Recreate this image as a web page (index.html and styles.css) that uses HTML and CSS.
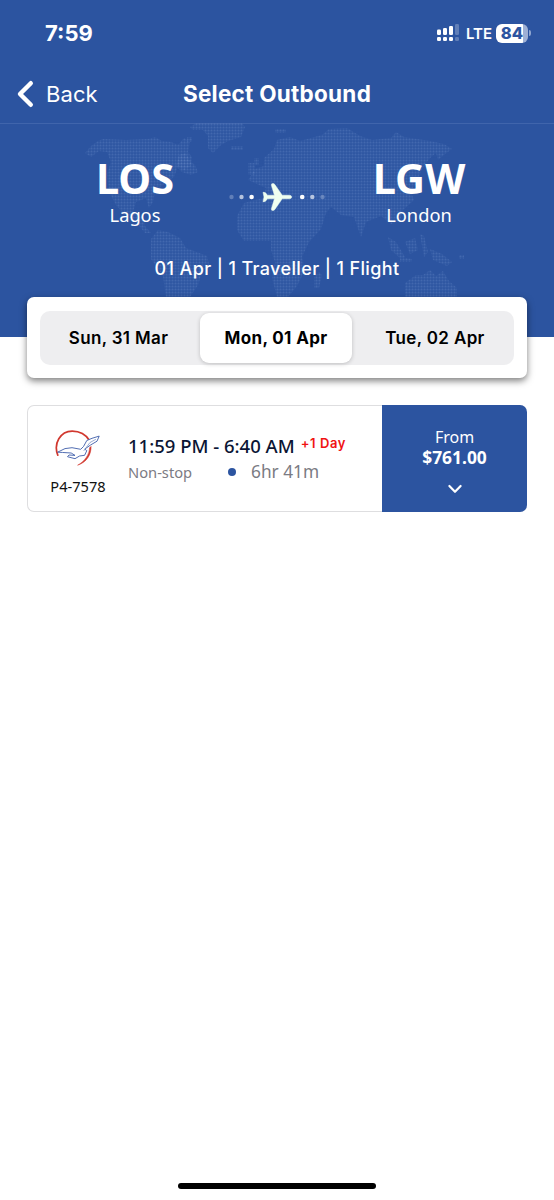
FILE: index.html
```html
<!DOCTYPE html>
<html lang="en">
<head>
<meta charset="utf-8">
<meta name="viewport" content="width=device-width, initial-scale=1">
<title>Select Outbound</title>
<link rel="stylesheet" href="styles.css">
</head>
<body>
<div class="screen">
  <header class="top">
    <div class="status">
      <span class="clock">7:59</span>
      <div class="indicators">
        <svg class="signal" width="23" height="18" viewBox="0 0 23 18" fill="#fff">
          <rect x="0" y="5.5" width="4" height="5.5" rx="1.2"/><rect x="6" y="4" width="4" height="7" rx="1.2"/><rect x="12" y="2" width="4" height="9" rx="1.2"/><rect x="18" y="0" width="4" height="11" rx="1.2" opacity=".25"/>
          <rect x="0" y="13" width="4" height="4" rx="1.2"/><rect x="6" y="13" width="4" height="4" rx="1.2"/><rect x="12" y="13" width="4" height="4" rx="1.2"/><rect x="18" y="13" width="4" height="4" rx="1.2" opacity=".25"/>
        </svg>
        <span class="network">LTE</span>
        <span class="battery"><span class="charge">84</span></span><span class="cap"></span>
      </div>
    </div>
    <nav class="nav">
      <div class="back">
        <svg width="18" height="28" viewBox="0 0 18 28" fill="none" stroke="#fff" stroke-width="4.4" stroke-linecap="round" stroke-linejoin="round"><path d="M14.8 3.2 4 14l10.8 10.8"/></svg>
        <span>Back</span>
      </div>
      <h1>Select Outbound</h1>
    </nav>
    <section class="hero">
      <svg class="map" width="554" height="174" viewBox="0 123 554 174">
        <defs><pattern id="dots" width="3" height="3" patternUnits="userSpaceOnUse"><rect x=".5" y=".5" width="2" height="2" rx=".6" fill="#8da9e0" fill-opacity=".23"/></pattern></defs>
        <g fill="url(#dots)">
          <path d="M85 153 91 146 98 141 103 139 126 140 148 139 155 137 162 141 171 142 178 145 184 138 190 142 188 152 192 157 191 166 184 170 178 166 174 177 164 184 155 192 153 202 149 208 146 198 136 202 133 212 143 217 145 226 151 233 145 233 136 222 124 214 116 205 109 192 107 174 111 162 107 152 99 151 91 157Z"/>
          <path d="M190 127 198 122 241 122 245 127 241 137 228 141 221 145 213 153 208 148 208 136 203 130 193 130Z"/>
          <path d="M179 155 186 153 190 161 195 165 198 172 191 175 182 172 176 166ZM187 137h5v5h-5ZM231 146h12v4h-12Z"/>
          <path d="M151 239 158 230 168 232 180 238 186 248 207 256 209 264 202 272 198 285 190 297 166 297 163 276 151 259Z"/>
          <path d="M248 180 255 169 264 166 264 158 274 149 277 140 290 137 300 141 322 135 329 129 347 128 360 136 372 140 391 138 396 132 404 137 430 141 444 144 452 149 445 154 438 160 436 153 429 159 421 171 417 184 410 190 414 200 403 210 400 221 391 224 381 216 366 222 361 237 354 217 341 215 331 207 326 213 321 229 309 242 302 257 305 270 297 286 288 297 277 297 272 278 275 262 271 250 271 241 244 241 237 230 237 216 244 203 263 198 266 188Z"/>
          <path d="M248 163h7v12h-7ZM254 158h5v7h-5ZM275 129h11v4h-11ZM314 277l5-5 3 3-3 13h-5ZM388 237l8 5 9 15-4 2-10-9ZM405 242l10-4 3 12-8 4ZM420 234l4 2 4 16-4 5ZM400 257l12 2v3h-12ZM430 249l12 5 10 8-5 4-14-6Z"/>
          <path d="M405 283 416 275 423 275 430 270 436 276 443 271 449 281 457 288 457 297 405 297ZM459 255h5v4h-5Z"/>
        </g>
      </svg>
      <div class="route">
        <div class="airport origin"><strong>LOS</strong><span>Lagos</span></div>
        <svg class="flight" width="98" height="32" viewBox="0 0 98 32">
          <g fill="#fff"><circle cx="3.5" cy="16" r="2.2" opacity=".25"/><circle cx="13.5" cy="16" r="2.2" opacity=".65"/><circle cx="23.6" cy="16" r="2.3"/><circle cx="74.2" cy="16" r="2.3"/><circle cx="84.3" cy="16" r="2.2" opacity=".65"/><circle cx="94.5" cy="16" r="2.2" opacity=".25"/></g>
          <path d="M35 11.3q2.3-.2 3.2 1.2l1.2 1.7h7L43.4 4.3q-.3-1.9 1.5-1.9 1.2.1 1.9 1.1l7.4 10.7h7.3q2.1.2 2.2 1.8-.1 1.6-2.2 1.8h-7.3l-7.4 10.7q-.7 1-1.9 1.1-1.8 0-1.5-1.9l3-9.9h-7l-1.2 1.7q-.9 1.4-3.2 1.2l1-4.7Z" fill="#effff0" stroke="#effff0" stroke-width=".5" stroke-linejoin="round"/>
        </svg>
        <div class="airport destination"><strong>LGW</strong><span>London</span></div>
      </div>
      <p class="summary">01 Apr | 1 Traveller | 1 Flight</p>
    </section>
  </header>
  <main>
    <div class="date-card">
      <div class="dates">
        <span class="date sunday">Sun, 31 Mar</span>
        <span class="date selected">Mon, 01 Apr</span>
        <span class="date tuesday">Tue, 02 Apr</span>
      </div>
    </div>
    <article class="ticket">
      <div class="carrier">
        <svg width="46" height="38" viewBox="0 0 46 38" fill="none" stroke-linecap="round" stroke-linejoin="round">
          <path d="M2.8 26.2C-1.8 14.5 5.3 2.2 17.2 2.1c8 .1 14.2 4.4 17.1 9.2" stroke="#d1382f" stroke-width="1.7"/>
          <path d="M36.1 17.2c.4 8.4-4.4 16.1-13.5 19 6.8-3.7 11.9-10.5 12-17.5" fill="#d1382f" stroke="#d1382f" stroke-width=".5"/>
          <path d="M3 23 10 19.6 17 18.7 25.7 20.3 28.5 17.5 31.8 11.5 37 9.3 44.2 7.1 42 12.2 35.4 16.1 29.8 20.1 31.8 21.7 29.6 26.3 24.5 27 20 29.7 12.5 27.7 14 26 20 26.4 16.2 24 8 23.5Z" fill="#fff" stroke="#3e5da9" stroke-width=".9"/>
          <path d="M29 21.5 35 13.5 40.5 10.5" stroke="#6f86bf" stroke-width=".7"/>
        </svg>
        <span>P4-7578</span>
      </div>
      <div class="details">
        <div class="times"><span class="hours">11:59 PM - 6:40 AM</span><span class="plus">+1 Day</span></div>
        <div class="duration"><span class="stops">Non-stop</span><span class="bullet"></span><span class="length">6hr 41m</span></div>
      </div>
      <div class="price">
        <span class="from">From</span>
        <strong>$761.00</strong>
        <svg width="16" height="12" viewBox="0 0 16 12" fill="none" stroke="#fff" stroke-width="2.2" stroke-linecap="round" stroke-linejoin="round"><path d="M2.4 3 8 8.8 13.6 3"/></svg>
      </div>
    </article>
  </main>
  <div class="home-bar"></div>
</div>
</body>
</html>
```
FILE: styles.css
```css
* { box-sizing: border-box; }
body { margin: 0; background: #fff; font-family: Inter, sans-serif; }
.screen { width: 554px; height: 1200px; display: flex; flex-direction: column; }
.top { height: 337px; flex: none; background: #2c54a0; color: #fff; }
.status { height: 65px; display: flex; justify-content: space-between; align-items: center; padding: 1px 23px 0 45px; }
.clock { font-size: 22px; font-weight: 700; line-height: 28px; }
.indicators { display: flex; align-items: center; }
.network { font-size: 15px; font-weight: 600; margin-left: 6px; width: 30px; }
.battery { width: 32px; height: 19px; border-radius: 6px; background: linear-gradient(90deg, #fff 0 84%, #9eb0d5 84%); }
.charge { display: block; width: 32px; text-align: center; color: #2c54a0; font-size: 16.5px; line-height: 19px; font-weight: 800; }
.cap { width: 2px; height: 6px; margin-left: 1px; border-radius: 0 2px 2px 0; background: #8ea5d0; }
.nav { height: 59px; display: grid; grid-template-columns: 167px 220px 167px; align-items: center; border-bottom: 1px solid #4065ac; }
.back { display: flex; align-items: center; padding-left: 16px; gap: 12px; font-size: 22px; letter-spacing: .1px; }
.nav h1 { margin: 0; text-align: center; font-size: 22.5px; line-height: 28px; font-weight: 700; letter-spacing: .26px; white-space: nowrap; }
.hero { position: relative; height: 213px; }
.map { position: absolute; left: 0; top: -1px; }
.route { position: relative; display: grid; grid-template-columns: 228px 98px 228px; padding-top: 30px; align-items: start; }
.airport { display: flex; flex-direction: column; align-items: center; font-family: "Noto Sans", sans-serif; }
.origin { padding-left: 42px; }
.destination { padding-right: 42px; }
.airport strong { font-size: 41.5px; line-height: 49px; font-weight: 700; }
.airport span { font-size: 18.3px; line-height: 24px; }
.flight { margin-top: 27px; }
.summary { position: relative; margin: 30px 0 0; text-align: center; font-size: 18px; line-height: 24px; font-weight: 500; letter-spacing: .37px; }
main { flex: 1; }
.date-card { position: relative; width: 500px; height: 81px; margin: -40px 27px 27px; padding: 14px 13px 13px; border-radius: 7px; background: #fff; box-shadow: 0 3px 7px rgba(0,0,0,.5); }
.dates { height: 54px; display: grid; grid-template-columns: 160px 152px 162px; align-items: center; border-radius: 10px; background: #eeeef0; }
.date { text-align: center; font-size: 17px; font-weight: 600; letter-spacing: .35px; color: #000; white-space: nowrap; }
.sunday { padding-right: 3px; }
.tuesday { padding-left: 4px; }
.selected { height: 50px; line-height: 51px; border-radius: 9px; background: #fff; font-weight: 700; box-shadow: 0 1px 4px rgba(0,0,0,.2); }
.ticket { width: 500px; height: 107px; margin-left: 27px; display: grid; grid-template-columns: 100px 254px 145px; border: 1px solid #dedee0; border-right: 0; border-radius: 7px; font-family: "Noto Sans", sans-serif; }
.carrier { display: flex; flex-direction: column; align-items: center; padding-top: 23px; font-size: 14.6px; line-height: 18px; gap: 10px; color: #111; }
.details { padding-top: 26px; }
.times { display: flex; height: 26px; align-items: center; white-space: nowrap; }
.hours { font-size: 18.5px; font-weight: 500; color: #0b1534; }
.plus { margin-left: 6px; margin-top: -4px; font-family: Inter, sans-serif; font-size: 13px; font-weight: 600; letter-spacing: .6px; color: #f01212; }
.duration { display: flex; height: 27px; align-items: center; color: #7b7b83; }
.stops { width: 100px; font-size: 14.7px; }
.bullet { width: 8px; height: 8px; border-radius: 50%; background: #2c54a0; }
.length { margin-left: 15px; font-size: 17.3px; }
.price { margin: -1px 0; border-radius: 0 7px 7px 0; background: #2c54a0; color: #fff; display: flex; flex-direction: column; align-items: center; padding-top: 22px; }
.from { font-size: 16px; line-height: 20px; }
.price strong { font-size: 17.4px; line-height: 20px; }
.price svg { margin-top: 16px; }
.home-bar { width: 198px; height: 6px; border-radius: 3px; background: #000; margin: 0 auto 11px; }
```
